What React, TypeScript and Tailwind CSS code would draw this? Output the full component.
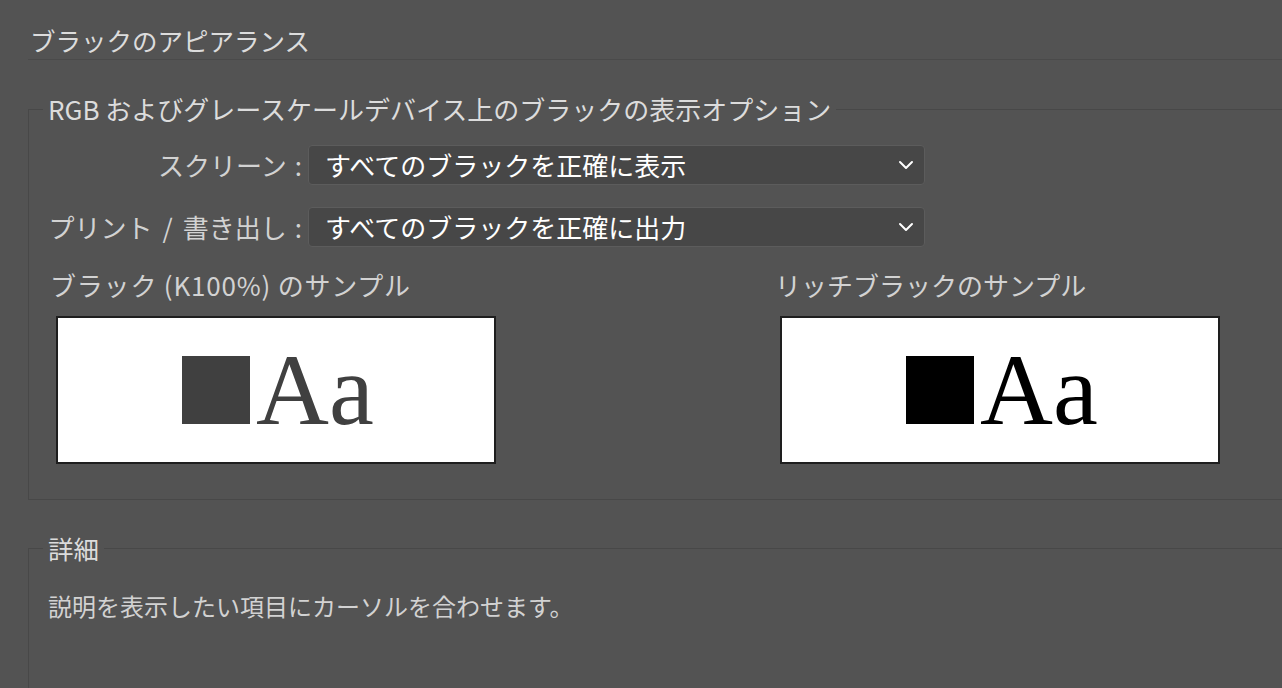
import React from "react";

const jp = { fontFamily: '"Noto Sans CJK JP", "Noto Sans", sans-serif' };
const serif = { fontFamily: '"Liberation Serif", "Times New Roman", serif' };

function Chevron() {
  return (
    <svg width="16" height="10" viewBox="0 0 16 10" fill="none">
      <path d="M2 2 L8 8 L14 2" stroke="#ffffff" strokeWidth="2" strokeLinecap="round" strokeLinejoin="round" />
    </svg>
  );
}

function Select({ value }: { value: string }) {
  return (
    <div className="flex h-[40px] w-[617px] items-center justify-between rounded-[4px] border border-[#5c5c5c] bg-[#474747] pl-[16px] pr-[10px]">
      <span className="text-[26px] leading-[30px] text-white">{value}</span>
      <Chevron />
    </div>
  );
}

function Sample({ color }: { color: string }) {
  return (
    <div className="flex h-[148px] w-[440px] justify-center border-2 border-[#1e1e1e] bg-white pl-[4px] pt-[22px]">
      <div className="flex items-baseline gap-[6px] self-start">
        <div className="h-[68px] w-[68px]" style={{ backgroundColor: color }} />
        <span className="text-[101px] leading-none" style={{ ...serif, color }}>
          Aa
        </span>
      </div>
    </div>
  );
}

export default function App() {
  return (
    <div className="h-[688px] w-[1282px] overflow-hidden bg-[#535353] pl-[28px]" style={jp}>
      <div className="border-b border-[#4a4a4a] pb-[4px] pl-[2px] pt-[25px] text-[25.5px] leading-[30px] text-[#dcdcdc]">
        ブラックのアピアランス
      </div>

      <fieldset className="mt-[34px] w-[1300px] border-b border-l border-t border-[#484848] pb-[35px]">
        <legend className="ml-[14px] px-[5px] text-[26px] leading-[30px] text-[#dcdcdc]">
          RGB およびグレースケールデバイス上のブラックの表示オプション
        </legend>

        <div className="mt-[21px] flex items-center gap-[6px]">
          <div className="w-[273px] text-right text-[26px] leading-[30px] text-[#d2d2d2]">
            スクリーン<span className="ml-[8px]">:</span>
          </div>
          <Select value="すべてのブラックを正確に表示" />
        </div>
        <div className="mt-[22px] flex items-center gap-[6px]">
          <div className="w-[273px] whitespace-nowrap text-right text-[26px] leading-[30px] text-[#d2d2d2]">
            プリント<span className="mx-[10px]">/</span>書き出し<span className="ml-[8px]">:</span>
          </div>
          <Select value="すべてのブラックを正確に出力" />
        </div>

        <div className="mt-[23px] flex pl-[21px]">
          <div className="w-[725px]">
            <div className="text-[26px] leading-[30px] tracking-[0.8px] text-[#d2d2d2]">ブラック (K100%) のサンプル</div>
            <div className="ml-[6px] mt-[16px]">
              <Sample color="#404040" />
            </div>
          </div>
          <div>
            <div className="text-[26px] leading-[30px] text-[#d2d2d2]">リッチブラックのサンプル</div>
            <div className="ml-[5px] mt-[16px]">
              <Sample color="#000000" />
            </div>
          </div>
        </div>
      </fieldset>

      <fieldset className="mt-[33px] h-[300px] w-[1300px] border-l border-t border-[#484848]">
        <legend className="ml-[14px] px-[5px] text-[25.5px] leading-[30px] text-[#dcdcdc]">詳細</legend>
        <div className="mt-[28px] pl-[19px] text-[24px] leading-[30px] text-[#d2d2d2]">
          説明を表示したい項目にカーソルを合わせます。
        </div>
      </fieldset>
    </div>
  );
}
